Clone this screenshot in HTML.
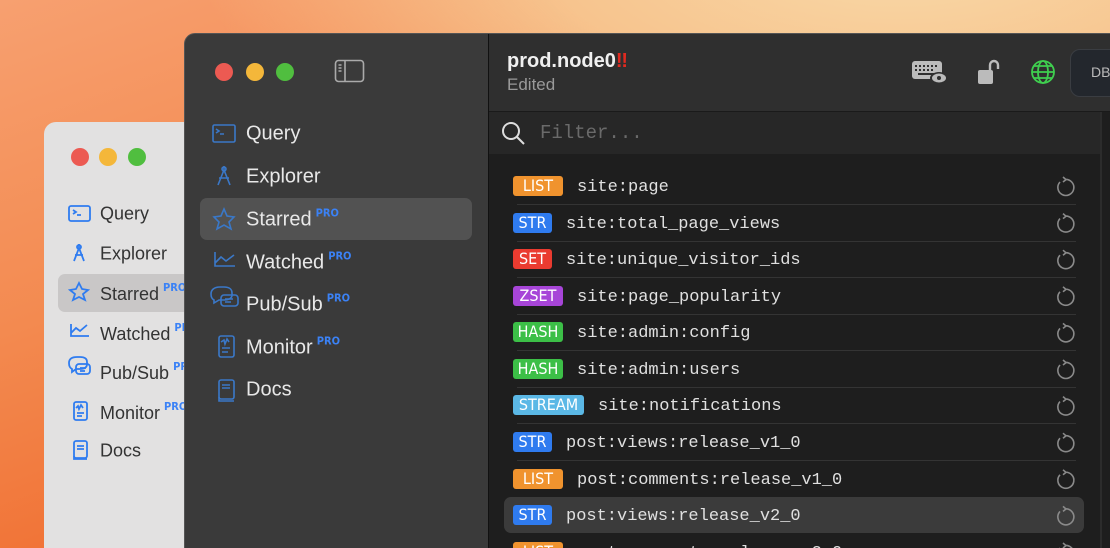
<!DOCTYPE html>
<html style="width:1110px;height:548px;overflow:hidden"><head><style>
*{margin:0;padding:0;box-sizing:border-box}
body{width:1110px;height:548px;overflow:hidden;position:relative;font-family:"Liberation Sans",sans-serif;
background:radial-gradient(ellipse 700px 260px at 900px -40px,#f8d9a8 0%,#f7c48e 50%,rgba(247,160,110,0) 100%),linear-gradient(160deg,#f7a070 0%,#f38a50 35%,#f06a2c 70%,#e95418 100%)}
.abs{position:absolute}
.back{left:44px;top:122px;width:200px;height:440px;background:#e2e1e1;border-radius:12px 0 0 0}
.dot{position:absolute;border-radius:50%}
.bi{position:absolute;left:100px;font-size:18px;color:#333;transform:translateY(-50%)}
.fi{position:absolute;left:246px;font-size:20px;color:#e8e8e8;transform:translateY(-50%)}
.pro{font-size:11px;font-weight:bold;color:#3b82f6;vertical-align:9px;margin-left:4px;font-family:"DejaVu Sans Condensed","Liberation Sans",sans-serif}
.front{left:184px;top:33px;width:940px;height:530px;background:#3a3a3a;border-radius:11px 0 0 0;border:1px solid #555;overflow:hidden}
.row{position:absolute;left:504px;width:580px;height:36px;margin-top:-18px}
.badge{position:absolute;left:9px;top:8px;height:20px;border-radius:3px;color:#fff;font-size:16px;line-height:20px;text-align:center;font-family:"DejaVu Sans Condensed","Liberation Sans",sans-serif}
.key{position:absolute;top:2px;line-height:36px;font-family:"Liberation Mono",monospace;font-size:17px;color:#e0e0e0}
.sep{position:absolute;left:13px;right:8px;bottom:-1px;height:1px;background:#343434}
</style></head><body>
<div class="abs back"></div>
<div class="dot" style="left:71px;top:148px;width:18px;height:18px;background:#ec5a52"></div>
<div class="dot" style="left:99px;top:148px;width:18px;height:18px;background:#f4b73a"></div>
<div class="dot" style="left:128px;top:148px;width:18px;height:18px;background:#50be3f"></div>
<div class="abs" style="left:58px;top:274px;width:140px;height:38px;background:#c9c7c7;border-radius:7px"></div>
<svg class="abs" style="left:66px;top:200px" width="30" height="270" fill="none" stroke="#2f7cf0" stroke-width="1.8">
<rect x="3" y="6" width="21" height="15" rx="2"/><path d="M7 10l3 2-3 2M11 15h4"/>
<path d="M13 44v4M13 48l-5 13M13 48l5 13M9 55h8"/><circle cx="13" cy="47" r="2"/>
<path d="M13 83l3 6 6 1-5 4 2 6-6-3-6 3 2-6-5-4 6-1z"/>
<path d="M5 124v12h18M5 133l5-5 4 3 7-6"/>
<path d="M3 163c0-4 3-6 8-6h3c5 0 7 2 7 5v2c0 3-2 5-7 5h-4l-4 3v-3c-2-1-3-3-3-6z"/><rect x="10" y="164" width="14" height="10" rx="3"/><path d="M14 168h6M14 171h5"/>
<rect x="8" y="202" width="13" height="18" rx="2"/><path d="M10 208l2-2 1 3 2-4 2 3M11 213h7M11 216h5"/>
<rect x="8" y="241" width="13" height="17" rx="2"/><path d="M11 246h7M11 249h7M8 256v3h13"/>
</svg>
<div class="bi" style="top:214px">Query</div>
<div class="bi" style="top:254px">Explorer</div>
<div class="bi" style="top:293px">Starred<span class="pro">PRO</span></div>
<div class="bi" style="top:333px">Watched<span class="pro">PRO</span></div>
<div class="bi" style="top:372px">Pub/Sub<span class="pro">PRO</span></div>
<div class="bi" style="top:412px">Monitor<span class="pro">PRO</span></div>
<div class="bi" style="top:451px">Docs</div>

<div class="abs front"></div>
<div class="dot" style="left:215px;top:63px;width:18px;height:18px;background:#ec5a52"></div>
<div class="dot" style="left:246px;top:63px;width:18px;height:18px;background:#f4b73a"></div>
<div class="dot" style="left:276px;top:63px;width:18px;height:18px;background:#50be3f"></div>
<svg class="abs" style="left:334px;top:59px" width="32" height="25" fill="none" stroke="#aaa" stroke-width="1.6"><rect x="1.5" y="1.5" width="28" height="21" rx="3"/><path d="M11 2v20M4.5 6h3M4.5 9h3M4.5 12h3"/></svg>
<div class="abs" style="left:200px;top:198px;width:272px;height:42px;background:#525252;border-radius:7px"></div>
<svg class="abs" style="left:210px;top:118px" width="32" height="290" fill="none" stroke="#3a78c8" stroke-width="1.6">
<rect x="3" y="7" width="22" height="17" rx="1.5"/><path d="M6 11l3 2-3 2M10 16h4"/>
<path d="M14 48v4M14 52l-6 15M14 52l6 15M9 60h10"/><circle cx="14" cy="51" r="2"/>
<path d="M14 91l3 7 7 1-5 5 2 7-7-4-7 4 2-7-5-5 7-1z"/>
<path d="M5 134v14h20M5 145l6-6 5 4 8-6"/>
<path d="M1 176c0-4 3-7 9-7h4c6 0 8 3 8 6v2c0 3-3 5-8 5h-5l-5 3v-3c-2-1-3-3-3-6z"/><rect x="11" y="177" width="17" height="11" rx="3"/><path d="M15 181h8M15 184h6"/>
<rect x="9" y="218" width="15" height="21" rx="2"/><path d="M11 224l3-2 1 4 2-5 2 3M12 230h8M12 234h6"/>
<rect x="9" y="262" width="15" height="19" rx="2"/><path d="M12 267h8M12 270h8M9 279v4h15"/>
</svg>
<div class="fi" style="top:134px">Query</div>
<div class="fi" style="top:177px">Explorer</div>
<div class="fi" style="top:219px">Starred<span class="pro">PRO</span></div>
<div class="fi" style="top:262px">Watched<span class="pro">PRO</span></div>
<div class="fi" style="top:304px">Pub/Sub<span class="pro">PRO</span></div>
<div class="fi" style="top:347px">Monitor<span class="pro">PRO</span></div>
<div class="fi" style="top:390px">Docs</div>

<div class="abs" style="left:488px;top:34px;width:1px;height:520px;background:#111"></div>
<div class="abs" style="left:489px;top:34px;width:630px;height:78px;background:#2f2f2f;border-bottom:1px solid #1a1a1a"></div>
<div class="abs" style="left:507px;top:50px;font-size:20px;font-weight:bold;color:#f0f0f0">prod.node0<span style="color:#e02a20">‼</span></div>
<div class="abs" style="left:507px;top:75px;font-size:17px;color:#9a9a9a">Edited</div>
<svg class="abs" style="left:910px;top:58px" width="40" height="28"><rect x="2" y="3" width="30" height="18" rx="3" fill="#bbb"/><g fill="#2f2f2f"><rect x="5" y="7" width="2" height="2"/><rect x="9" y="7" width="2" height="2"/><rect x="13" y="7" width="2" height="2"/><rect x="17" y="7" width="2" height="2"/><rect x="21" y="7" width="2" height="2"/><rect x="25" y="7" width="2" height="2"/><rect x="5" y="11" width="2" height="2"/><rect x="9" y="11" width="2" height="2"/><rect x="13" y="11" width="2" height="2"/><rect x="17" y="11" width="2" height="2"/><rect x="21" y="11" width="2" height="2"/><rect x="8" y="15" width="16" height="2"/></g><ellipse cx="29" cy="20" rx="9" ry="6" fill="#2f2f2f"/><ellipse cx="29" cy="20" rx="7" ry="4.5" fill="#bbb"/><circle cx="29" cy="20" r="2" fill="#2f2f2f"/></svg>
<svg class="abs" style="left:976px;top:58px" width="30" height="28" fill="none"><rect x="2" y="12" width="15" height="14" rx="2" fill="#bbb"/><path d="M14 12V7a4 4 0 018 0v4" stroke="#bbb" stroke-width="2.4"/></svg>
<svg class="abs" style="left:1030px;top:59px" width="26" height="26" fill="none" stroke="#3fcf4f" stroke-width="1.8"><circle cx="13" cy="13" r="11"/><ellipse cx="13" cy="13" rx="5" ry="11"/><path d="M2 13h22M4 7h18M4 19h18"/></svg>
<div class="abs" style="left:1070px;top:49px;width:60px;height:48px;background:#23272d;border-radius:10px;border:1px solid #3a3d42"></div>
<div class="abs" style="left:1091px;top:64px;font-size:14px;color:#bbb">DB</div>

<div class="abs" style="left:489px;top:112px;width:611px;height:42px;background:#272727"></div>
<svg class="abs" style="left:501px;top:121px" width="26" height="26" fill="none" stroke="#ddd" stroke-width="2"><circle cx="10" cy="10" r="8"/><path d="M16 16l7 7"/></svg>
<div class="abs" style="left:540px;top:122px;font-family:'Liberation Mono',monospace;font-size:19px;color:#6a6a6a">Filter...</div>
<div class="abs" style="left:489px;top:154px;width:611px;height:400px;background:#1e1e1e"></div>
<div class="abs" style="left:1100px;top:112px;width:2px;height:440px;background:#2c2c2c"></div>
<div class="abs" style="left:1102px;top:112px;width:10px;height:440px;background:#1e1e1e"></div>

<div class="row" style="top:515px;background:#3b3b3b;border-radius:7px"></div>

<div class="row" style="top:186px"><div class="badge" style="width:50px;background:#f0932e">LIST</div><div class="key" style="left:73px">site:page</div><div class="sep"></div></div>
<div class="row" style="top:223px"><div class="badge" style="width:39px;background:#2f7bef">STR</div><div class="key" style="left:62px">site:total_page_views</div><div class="sep"></div></div>
<div class="row" style="top:259px"><div class="badge" style="width:39px;background:#ea3b30">SET</div><div class="key" style="left:62px">site:unique_visitor_ids</div><div class="sep"></div></div>
<div class="row" style="top:296px"><div class="badge" style="width:50px;background:#a745d8">ZSET</div><div class="key" style="left:73px">site:page_popularity</div><div class="sep"></div></div>
<div class="row" style="top:332px"><div class="badge" style="width:50px;background:#3cbf47">HASH</div><div class="key" style="left:73px">site:admin:config</div><div class="sep"></div></div>
<div class="row" style="top:369px"><div class="badge" style="width:50px;background:#3cbf47">HASH</div><div class="key" style="left:73px">site:admin:users</div><div class="sep"></div></div>
<div class="row" style="top:405px"><div class="badge" style="width:71px;background:#5bb8e6">STREAM</div><div class="key" style="left:94px">site:notifications</div><div class="sep"></div></div>
<div class="row" style="top:442px"><div class="badge" style="width:39px;background:#2f7bef">STR</div><div class="key" style="left:62px">post:views:release_v1_0</div><div class="sep"></div></div>
<div class="row" style="top:479px"><div class="badge" style="width:50px;background:#f0932e">LIST</div><div class="key" style="left:73px">post:comments:release_v1_0</div></div>
<div class="row" style="top:515px"><div class="badge" style="width:39px;background:#2f7bef">STR</div><div class="key" style="left:62px">post:views:release_v2_0</div></div>
<div class="row" style="top:552px"><div class="badge" style="width:50px;background:#f0932e">LIST</div><div class="key" style="left:73px">post:comments:release_v2_0</div></div>

<svg class="abs" style="left:1052px;top:172px" width="24" height="376" fill="none" stroke="#8a8a8a" stroke-width="1.6">
<g id="r"><path d="M8 10a8 8 0 1 0 5-2.5"/><path d="M11 5l3 2.6-3 2.4"/></g>
<use href="#r" y="36.6"/><use href="#r" y="73.2"/><use href="#r" y="109.8"/><use href="#r" y="146.4"/><use href="#r" y="183"/><use href="#r" y="219.6"/><use href="#r" y="256.2"/><use href="#r" y="292.8"/><use href="#r" y="329.4"/><use href="#r" y="366"/>
</svg>
</body></html>
